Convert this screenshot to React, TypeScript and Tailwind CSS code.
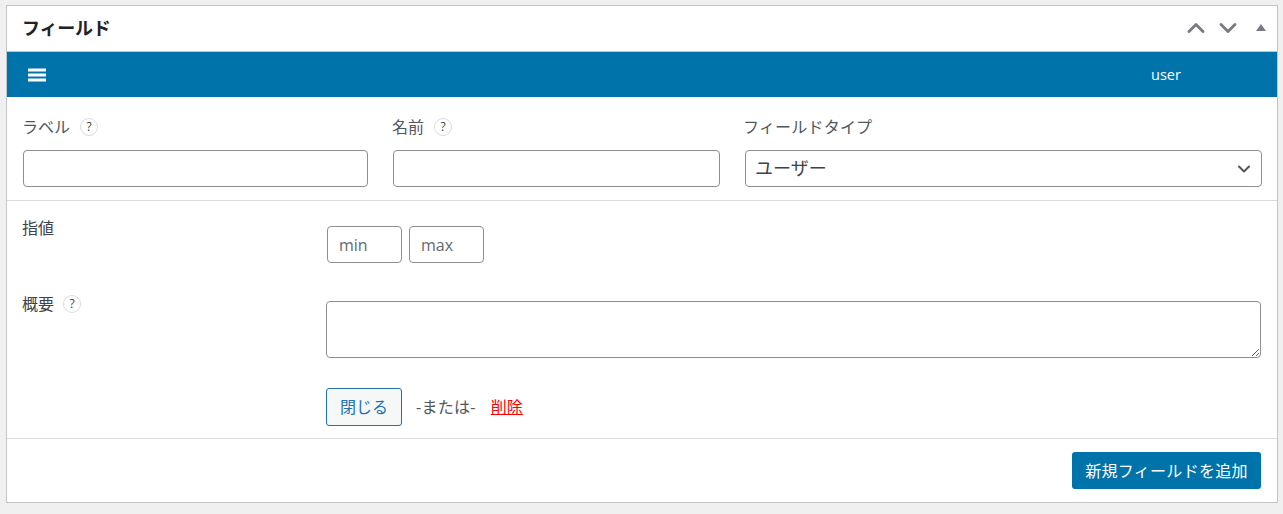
import { ChevronDown, ChevronUp } from 'lucide-react'

const jp = "font-['Open_Sans','Noto_Sans_CJK_JP',sans-serif]"

function Help({ gap = 'ml-[10px]' }: { gap?: string }) {
  return (
    <span className={`${gap} flex h-[18px] w-[18px] items-center justify-center rounded-full border border-[#dcdcde] text-[12px] text-[#3c434a]`}>
      ?
    </span>
  )
}

const inputCls = 'block h-[37px] rounded-[4px] border border-[#8c8f94] bg-white'

export default function App() {
  return (
    <div className={`h-[514px] w-[1283px] overflow-hidden bg-[#f0f0f1] pl-[6px] pt-[5px] ${jp}`}>
      <div className="h-[498px] w-[1272px] border border-[#c3c4c7] bg-white">
        {/* title */}
        <div className="flex h-[46px] items-center justify-between border-b border-[#c3c4c7] pl-[15px] pr-[11px]">
          <h2 className="mb-[2px] text-[18px] font-bold leading-none tracking-[-0.2px] text-[#1d2327]">フィールド</h2>
          <div className="mb-[1px] flex items-center text-[#787c82]">
            <ChevronUp size={28} strokeWidth={2.5} />
            <ChevronDown size={28} strokeWidth={2.5} className="ml-[4px]" />
            <svg width="10" height="7" viewBox="0 0 10 7" className="mb-[1px] ml-[14px]">
              <path d="M5 0 L10 7 L0 7 Z" fill="#787c82" />
            </svg>
          </div>
        </div>

        {/* field handle */}
        <div className="flex h-[45px] items-center bg-[#0073aa] pl-[20px] text-white">
          <svg width="20" height="14" viewBox="0 0 20 14" fill="currentColor">
            <rect x="1" y="0.5" width="18" height="3" />
            <rect x="1" y="5.5" width="18" height="3" />
            <rect x="1" y="10.5" width="18" height="3" />
          </svg>
          <span className="ml-[1104px] text-[14.5px]">user</span>
        </div>

        {/* label / name / type */}
        <div className="flex h-[104px] border-b border-[#dcdcde] pl-[15px] text-[#50575e]">
          <div className="w-[370px]">
            <div className="mt-[18px] flex h-[24px] items-center text-[16px]">
              ラベル
              <Help />
            </div>
            <input className={`${inputCls} ml-px mt-[11px] w-[345px]`} />
          </div>
          <div className="w-[352px]">
            <div className="mt-[18px] flex h-[24px] items-center text-[16px]">
              名前
              <Help />
            </div>
            <input className={`${inputCls} ml-px mt-[11px] w-[327px]`} />
          </div>
          <div>
            <div className="-ml-px mt-[18px] flex h-[24px] items-center text-[16px] tracking-[0.2px]">フィールドタイプ</div>
            <div
              className={`${inputCls} ml-px mt-[11px] flex w-[517px] items-center justify-between pl-[9px] pr-[7px] text-[18px] text-[#3c434a]`}
            >
              ユーザー
              <ChevronDown size={20} strokeWidth={2.4} className="text-[#50575e]" />
            </div>
          </div>
        </div>

        {/* min / max */}
        <div className="flex h-[76px] pl-[15px] pt-[25px]">
          <div className="w-[304px] text-[16px] leading-[5px] text-[#3c434a]">指値</div>
          <div className="ml-px flex gap-[7px]">
            <input placeholder="min" className={`${inputCls} w-[75px] px-[11px] text-[16px] placeholder:text-[#646970]`} />
            <input placeholder="max" className={`${inputCls} w-[75px] px-[11px] text-[16px] placeholder:text-[#646970]`} />
          </div>
        </div>

        {/* description */}
        <div className="flex h-[111px] pl-[15px] pt-[24px]">
          <div className="flex h-[6px] w-[304px] items-center text-[16px] text-[#3c434a]">
            概要
            <Help gap="ml-[9px]" />
          </div>
          <textarea className="block h-[57px] w-[935px] rounded-[4px] border border-[#8c8f94] bg-white" />
        </div>

        {/* close / delete */}
        <div className="flex h-[51px] items-start border-b border-[#dcdcde] pl-[319px]">
          <button className="h-[38px] w-[76px] rounded-[3px] border border-[#2271b1] bg-[#f6f7f7] text-[16px] text-[#2271b1]">
            閉じる
          </button>
          <span className="ml-[14px] mt-[7px] text-[16px] tracking-[0.3px] text-[#50575e]">-または-</span>
          <a className="ml-[15px] mt-[7px] text-[16px] text-[#ff0000] underline">削除</a>
        </div>

        {/* footer */}
        <div className="flex justify-end pr-[16px] pt-[13px]">
          <button className="h-[37px] w-[189px] rounded-[3px] bg-[#0073aa] text-[16px] tracking-[0.3px] text-white">
            新規フィールドを追加
          </button>
        </div>
      </div>
    </div>
  )
}
